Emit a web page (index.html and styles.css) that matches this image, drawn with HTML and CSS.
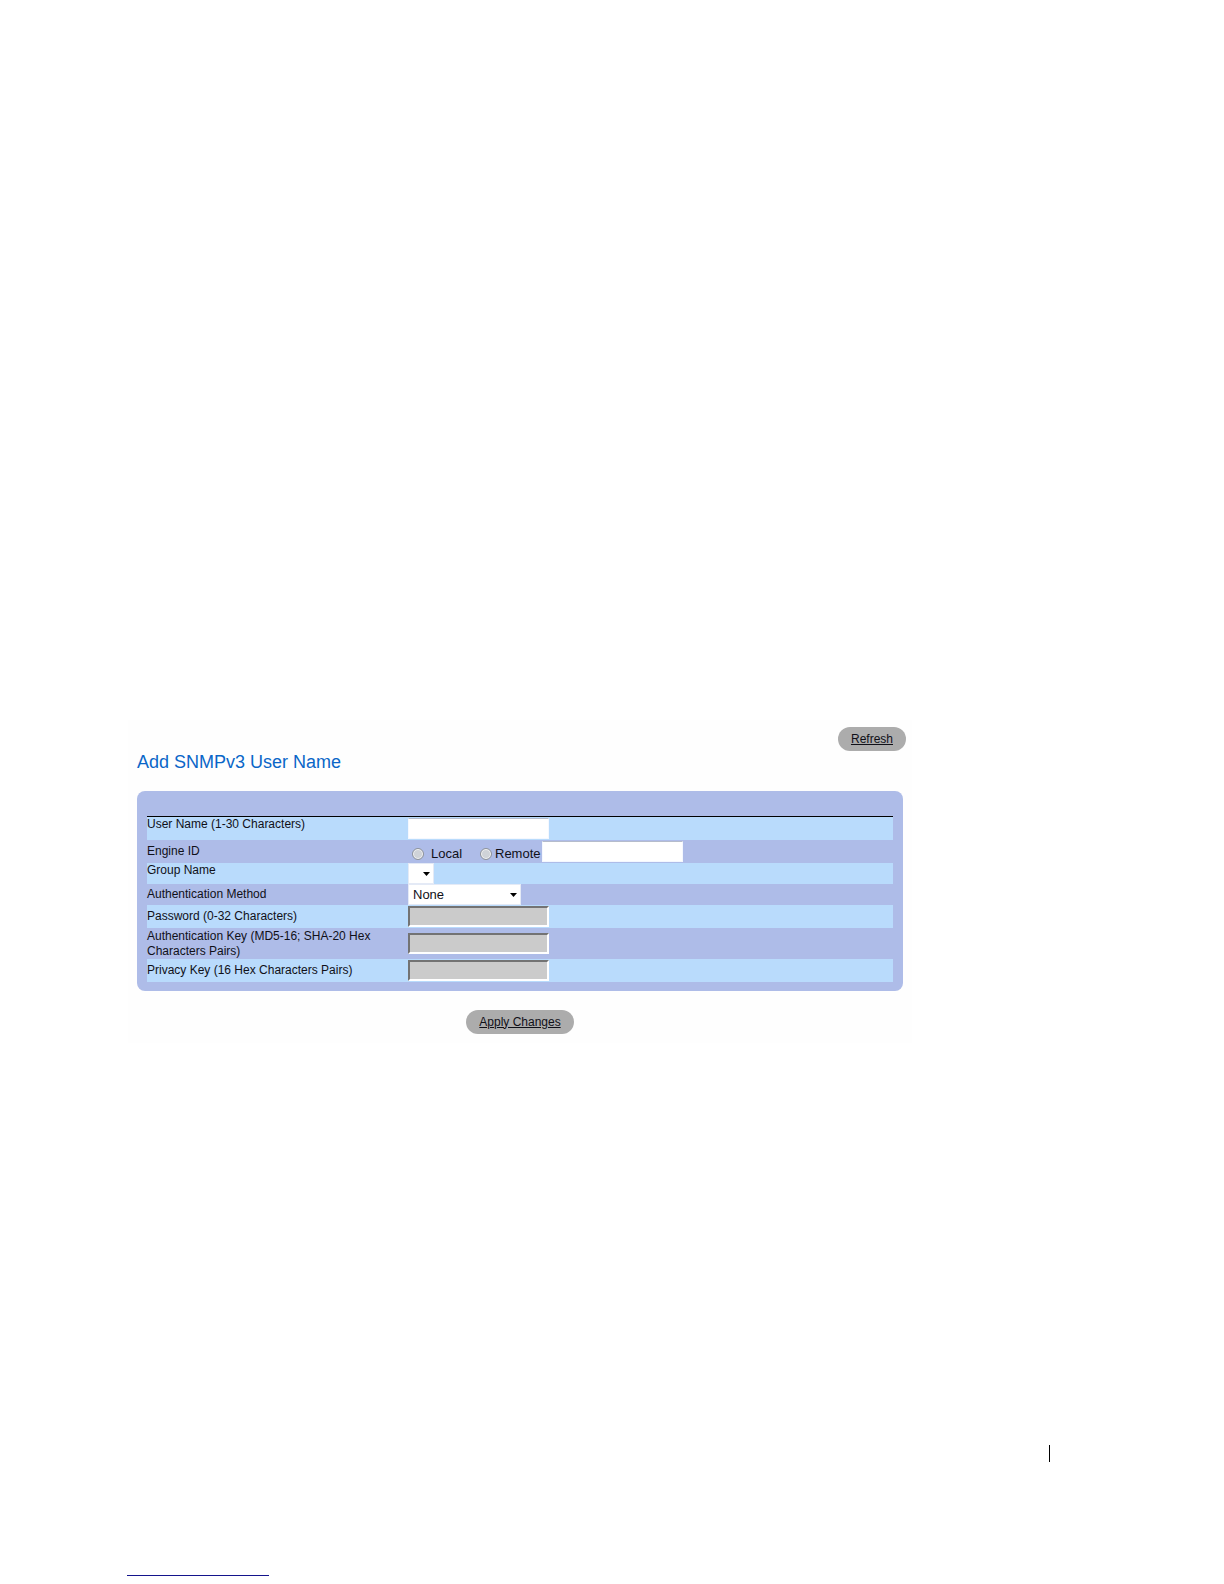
FILE: index.html
```html
<!DOCTYPE html>
<html lang="en">
<head>
    <meta charset="UTF-8">
    <meta name="viewport" content="width=device-width, initial-scale=1.0">
    <title>Add SNMPv3 User Name</title>
    <link rel="stylesheet" href="styles.css">
</head>
<body>

    <main class="content">
        <form class="user-form">
            <div class="toolbar">
                <button type="button" class="pill">Refresh</button>
            </div>
            <h1>Add SNMPv3 User Name</h1>

            <div class="panel">
                <table class="fields">
                    <tr class="odd short-label">
                        <th scope="row"><label for="userName">User Name (1-30 Characters)</label></th>
                        <td><input type="text" class="box" id="userName" maxlength="30"></td>
                    </tr>
                    <tr>
                        <th scope="row"><label for="engineId">Engine ID</label></th>
                        <td>
                            <div class="engine">
                                <label class="local"><input type="radio" name="engine" value="local">Local</label>
                                <label class="remote"><input type="radio" name="engine" value="remote">Remote</label>
                                <input type="text" class="box" id="engineId">
                            </div>
                        </td>
                    </tr>
                    <tr class="odd low short-label">
                        <th scope="row"><label for="groupName">Group Name</label></th>
                        <td>
                            <div class="picker small">
                                <select id="groupName"><option></option></select>
                                <svg class="arrow" viewBox="0 0 7 4"><path d="M0 0h7L3.500 4z"/></svg>
                            </div>
                        </td>
                    </tr>
                    <tr class="low">
                        <th scope="row"><label for="authMethod">Authentication Method</label></th>
                        <td>
                            <div class="picker">
                                <select id="authMethod">
                                    <option>None</option>
                                    <option>MD5 Password</option>
                                    <option>SHA Password</option>
                                    <option>MD5 Key</option>
                                    <option>SHA Key</option>
                                </select>
                                <svg class="arrow" viewBox="0 0 7 4"><path d="M0 0h7L3.500 4z"/></svg>
                            </div>
                        </td>
                    </tr>
                    <tr class="odd">
                        <th scope="row"><label for="password">Password (0-32 Characters)</label></th>
                        <td><input type="password" class="box" id="password" disabled></td>
                    </tr>
                    <tr class="tall">
                        <th scope="row"><label for="authKey">Authentication Key (MD5-16; SHA-20 Hex Characters Pairs)</label></th>
                        <td><input type="text" class="box" id="authKey" disabled></td>
                    </tr>
                    <tr class="odd">
                        <th scope="row"><label for="privacyKey">Privacy Key (16 Hex Characters Pairs)</label></th>
                        <td><input type="text" class="box" id="privacyKey" disabled></td>
                    </tr>
                </table>
            </div>

            <div class="actions">
                <button type="button" class="pill">Apply Changes</button>
            </div>
        </form>
    </main>

    <footer>
        <div class="divider"></div>
        <div class="rule"></div>
    </footer>

</body>
</html>
```

FILE: styles.css
```css
* {
    box-sizing: border-box;
}

body {
    margin: 0;
    padding-top: 720px;
    background: #fff;
    color: #101018;
    font-family: "Liberation Sans", Arial, sans-serif;
    font-size: 13px;
    line-height: 15px;
}

.content {
    margin: 0 312px 0 128px;
    padding: 7px 9px 9px;
    background: #fefefe;
}

.toolbar {
    display: flex;
    justify-content: flex-end;
    margin-right: -3px;
}

.pill {
    height: 24px;
    padding: 0 13px;
    border: none;
    border-radius: 12px;
    background: #acacac;
    color: #101018;
    font: inherit;
    font-size: 12px;
    text-decoration: underline;
    cursor: pointer;
}

h1 {
    margin: 0 0 17px;
    color: #0a66c8;
    font-size: 18px;
    font-weight: normal;
    line-height: 23px;
}

.panel {
    padding: 25px 10px 9px;
    border-radius: 8px;
    background: #aebce8;
}

/* Field table */
.fields {
    width: 100%;
    border-top: 1px solid #000;
    border-spacing: 0;
    table-layout: fixed;
}

.fields tr {
    height: 23px;
}

.fields .low {
    height: 21px;
}

.fields .tall {
    height: 31px;
}

.fields .odd {
    background: #b9dbfc;
}

.fields th,
.fields td {
    padding: 0;
    vertical-align: middle;
}

.fields th {
    width: 261px;
    padding-right: 20px;
    font-size: 12px;
    font-weight: normal;
    text-align: left;
}

.fields .short-label th {
    vertical-align: top;
}

.fields label {
    display: block;
}

.box {
    display: block;
    width: 141px;
    height: 21px;
    padding: 0 4px;
    border: 1px solid #f4f8ff;
    border-top-color: #b5bccb;
    background: #fff;
    font: inherit;
}

.box:disabled {
    border: 2px solid;
    border-color: #737373 #fff #fff #737373;
    background: #cbcbcb;
}

/* Local / remote engine */
.engine {
    display: flex;
    align-items: center;
}

.engine label {
    display: flex;
    align-items: center;
    padding-top: 4px;
}

.engine input[type="radio"] {
    appearance: none;
    width: 12px;
    height: 12px;
    margin: 0 3px 0 0;
    border: 1px solid #8d939c;
    border-radius: 50%;
    background: #cfd3d8;
    box-shadow: inset 0 0 0 1px #f4f4f4;
}

.engine input[type="radio"]:checked {
    background: #234;
}

.engine .local {
    width: 72px;
    padding-left: 4px;
}

.engine .local input[type="radio"] {
    margin-right: 7px;
}

.engine .remote {
    width: 62px;
}

/* Drop-downs */
.picker {
    position: relative;
    width: 113px;
}

.picker.small {
    width: 26px;
}

.picker select {
    display: block;
    appearance: none;
    width: 100%;
    height: 21px;
    padding: 0 4px;
    border: 1px solid #e4eaf6;
    border-radius: 0;
    background: #fff;
    color: #101018;
    font: inherit;
}

.arrow {
    position: absolute;
    top: 9px;
    right: 4px;
    width: 7px;
    height: 4px;
    pointer-events: none;
}

.actions {
    display: flex;
    justify-content: center;
    padding-top: 19px;
}

/* Page footer */
footer {
    padding: 402px 174px 8px 127px;
}

.divider {
    height: 17px;
    border-right: 1px solid #000;
}

.rule {
    width: 142px;
    margin-top: 113px;
    border-top: 1px solid #14148c;
}
```
